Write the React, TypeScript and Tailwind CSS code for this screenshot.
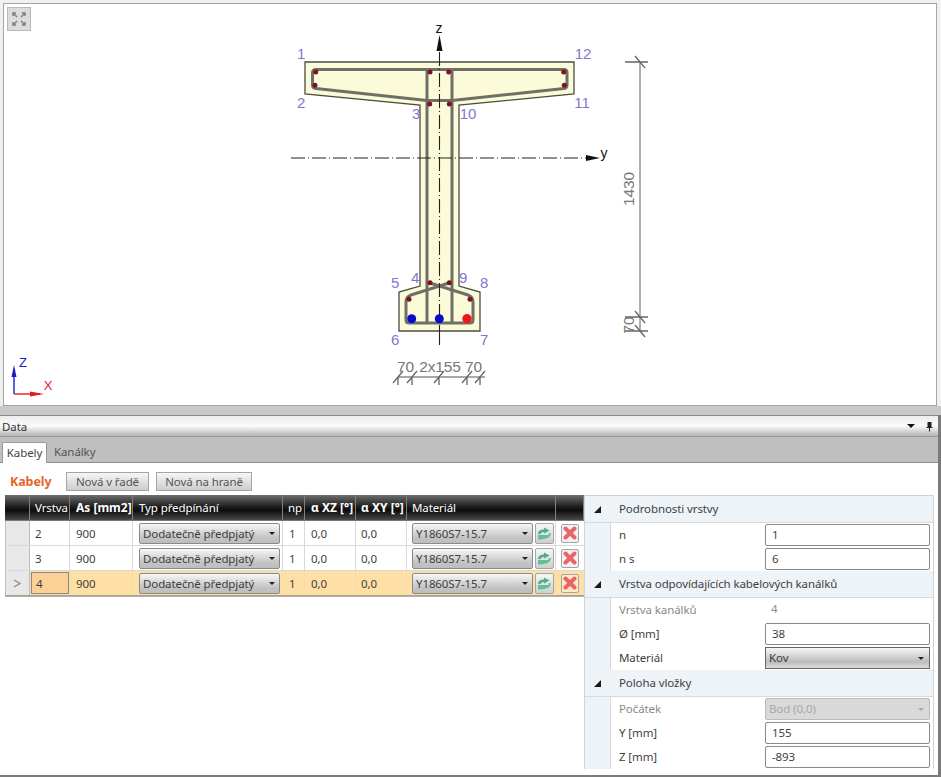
import React from "react";

const cols = [25, 40, 63, 150, 22, 51, 51, 149, 28];

function Select({ text, w }: { text: string; w: string }) {
  return (
    <div className={`${w} h-[21px] flex items-center justify-between pl-[3px] pr-[4px] border border-[#8a8a8a] rounded-[2px] bg-gradient-to-b from-[#f8f8f8] via-[#c4c4c4] via-70% to-[#bdbdbd] text-[#3f3f3f]`}>
      <span className="whitespace-nowrap pt-[1px]">{text}</span>
      <span className="w-0 h-0 border-x-[3px] border-x-transparent border-t-[3px] border-t-[#222]" />
    </div>
  );
}

function Refresh() {
  return (
    <div className="w-[19px] h-[21px] ml-[2px] border border-[#a5a5a5] rounded-[2px] bg-gradient-to-b from-[#f6f6f6] to-[#cfcfcf] flex items-center justify-center">
      <svg width="15" height="13" viewBox="0 0 15 13">
        <path d="M1 7 Q1 2.5 7 2.5 L7 0.5 L12.5 3.5 L7 6.5 L7 5 Q4 5 3.5 7 Z" fill="#4fae86" />
        <path d="M14 6 Q14 12.5 1 12.5 L1 8 L12 8 L11 6.5 Z" fill="#64be98" />
      </svg>
    </div>
  );
}

function Del({ sel }: { sel?: boolean }) {
  return (
    <div className={`w-[18px] h-[19px] border border-[#a5a5a5] rounded-[2px] flex items-center justify-center ${sel ? "bg-[#fde9c4]" : "bg-[#f2f2f2]"}`}>
      <svg width="14" height="14" viewBox="0 0 14 14">
        <path d="M2.5 2.5 L11.5 11.5 M11.5 2.5 L2.5 11.5" stroke="#e8656a" strokeWidth="4" strokeLinecap="round" />
      </svg>
    </div>
  );
}

function Row({ v, sel }: { v: string; sel?: boolean }) {
  const line = sel ? "border-r-[#f3dcae]" : "border-r-[#d9d9d9]";
  const cell = `h-full flex items-center border-r ${line}`;
  const txt = "pt-[1px]";
  return (
    <div className={`flex h-[25px] border-b ${sel ? "border-b-[#a9a38a] bg-[#fedfa6]" : "border-b-[#d9d9d9] bg-white"} text-[#3f3f3f]`}>
      <div style={{ width: cols[0] }} className="h-full flex items-center justify-center bg-[#e8e8e8] border-x border-[#bdbdbd] text-[#888]">
        {sel ? (
          <svg width="9" height="9" viewBox="0 0 9 9"><path d="M1 1 L7 4.5 L1 8" fill="none" stroke="#8a8a8a" strokeWidth="1.3" /></svg>
        ) : null}
      </div>
      {sel ? (
        <div style={{ width: cols[1] }} className="h-full flex items-center pl-[1px] border-r border-r-[#f3dcae]">
          <div className="w-[38px] h-[22px] pl-[4px] pt-[1px] flex items-center border border-[#8a8a8a] bg-[#fdd096]">{v}</div>
        </div>
      ) : (
        <div style={{ width: cols[1] }} className={`${cell} ${txt} pl-[5px]`}>{v}</div>
      )}
      <div style={{ width: cols[2] }} className={`${cell} ${txt} pl-[6px]`}>900</div>
      <div style={{ width: cols[3] }} className={`${cell} pl-[6px]`}><Select text="Dodatečně předpjatý" w="w-[141px]" /></div>
      <div style={{ width: cols[4] }} className={`${cell} ${txt} pl-[6px]`}>1</div>
      <div style={{ width: cols[5] }} className={`${cell} ${txt} pl-[6px]`}>0,0</div>
      <div style={{ width: cols[6] }} className={`${cell} ${txt} pl-[5px]`}>0,0</div>
      <div style={{ width: cols[7] }} className={`${cell} pl-[5px]`}><Select text="Y1860S7-15.7" w="w-[121px]" /><Refresh /></div>
      <div style={{ width: cols[8] }} className="h-full flex items-center justify-center"><Del sel={sel} /></div>
    </div>
  );
}

function Head({ i, t, bold, pl = 5 }: { i: number; t: string; bold?: boolean; pl?: number }) {
  return (
    <div
      style={{ width: cols[i], paddingLeft: pl }}
      className={`h-full flex items-center border-r border-[#808080] whitespace-nowrap ${bold ? "font-bold text-[12px] tracking-normal" : ""}`}
    >
      {t}
    </div>
  );
}

function Group({ t }: { t: string }) {
  return (
    <div className="h-[27px] flex items-center bg-[#eef3f8] border-b border-[#d5dbe0] text-[#3f3f3f]">
      <div className="w-[26px] flex justify-center pr-[2px]">
        <span className="w-0 h-0 border-l-[7px] border-l-transparent border-b-[7px] border-b-[#1a1a1a]" />
      </div>
      <span className="pl-[8px]">{t}</span>
    </div>
  );
}

function Prop({ l, v, kind, dis }: { l: string; v: string; kind?: "plain" | "select" | "disabled"; dis?: boolean }) {
  return (
    <div className="h-[24px] flex bg-white">
      <div className="w-[26px] bg-[#eef3f8] border-r border-[#d5dbe0]" />
      <div className={`w-[154px] pl-[8px] flex items-center ${dis ? "text-[#8a8a8a]" : "text-[#3f3f3f]"}`}>{l}</div>
      <div className="flex-1 flex items-center">
        {kind === "plain" ? (
          <span className="pl-[6px] -mt-[3px] text-[#8a8a8a]">{v}</span>
        ) : kind === "select" ? (
          <div className="w-[165px] h-[22px] flex items-center justify-between px-[3px] border border-[#666] bg-gradient-to-b from-[#f6f6f6] via-[#bcbcbc] via-70% to-[#dcdcdc] text-[#3a3a3a]">
            <span>{v}</span>
            <span className="w-0 h-0 border-x-[3px] border-x-transparent border-t-[3px] border-t-[#222] mr-[2px]" />
          </div>
        ) : kind === "disabled" ? (
          <div className="w-[165px] h-[22px] flex items-center justify-between px-[3px] border border-[#bbb] rounded-[2px] bg-[#d9d9d9] text-[#a8a8a8]">
            <span>{v}</span>
            <span className="w-0 h-0 border-x-[3px] border-x-transparent border-t-[3px] border-t-[#aaa] mr-[2px]" />
          </div>
        ) : (
          <div className="w-[165px] h-[22px] flex items-center pl-[6px] border border-[#8a8a8a] rounded-[2px] bg-white text-[#3f3f3f]">{v}</div>
        )}
      </div>
    </div>
  );
}

function Tick({ x, y }: { x: number; y: number }) {
  return <path d={`M${x - 5} ${y + 6} L${x + 5} ${y - 6} M${x} ${y} L${x} ${y + 8}`} stroke="#666" strokeWidth="1.3" fill="none" />;
}

function TickV({ x, y }: { x: number; y: number }) {
  return <path d={`M${x - 5} ${y - 6} L${x + 5} ${y + 6} M${x - 15} ${y} L${x + 8} ${y}`} stroke="#666" strokeWidth="1.3" fill="none" />;
}

function Drawing() {
  const dark = "#7a1520";
  const reds: [number, number][] = [
    [315.7, 72], [315, 85.3], [430, 72], [448.7, 72], [563.7, 72], [564.3, 85.3], [429.7, 104], [449.3, 104],
    [430, 282.7], [449.3, 282.7], [409, 299.3], [470, 299.3],
  ];
  const labels: [string, number, number][] = [
    ["1", 301, 59], ["2", 301, 108], ["3", 416, 119], ["10", 468, 119], ["11", 582, 108], ["12", 583, 59],
    ["4", 415, 283], ["5", 395, 288], ["9", 463, 283], ["8", 484, 288], ["6", 395, 345], ["7", 484, 345],
  ];
  return (
    <svg width="932" height="401" viewBox="4 4 932 401" className="block" fontFamily="'Liberation Sans', sans-serif">
      <path d="M305 62 H574 V94 L459 105 V286 L480 292 V331 H399 V292 L420 286 V105 L305 94 Z" fill="#fbfbd9" stroke="#4c4c40" strokeWidth="1.3" />
      <g fill="none" stroke="#6f6f68" strokeWidth="3" strokeLinejoin="round">
        <path d="M316 69.5 H564 Q567 69.5 567 72.5 V85 Q567 88 564 88.5 L452 100.5 H427 L316 88.5 Q312.5 88 312.5 85 V73 Q312.5 69.5 316 69.5 Z" />
        <path d="M427 69 V323 M452 69 V323" />
        <path d="M449 283 L411 295 Q406 297 406 302 V320 Q406 323 409 323 H470 Q473 323 473 320 V302 Q473 297 468 295 L430 283" />
      </g>
      <g stroke="#222" strokeWidth="1.1" fill="none" strokeDasharray="14 3 1 3">
        <path d="M439.5 52 V331" />
        <path d="M291 158 H588" />
      </g>
      <path d="M439.5 331 V345" stroke="#222" strokeWidth="1.1" />
      <path d="M439.5 35 L442.5 51 H436.5 Z" fill="#111" />
      <path d="M586 155 L600 158 L586 161 Z" fill="#111" />
      <text x="439" y="33" fontSize="14" textAnchor="middle" fill="#111">z</text>
      <text x="604" y="158" fontSize="14" textAnchor="middle" fill="#111">y</text>
      {reds.map(([x, y], i) => <circle key={i} cx={x} cy={y} r="2.5" fill={dark} />)}
      <circle cx="411.7" cy="318.7" r="4.5" fill="#0a0ac8" />
      <circle cx="439.3" cy="318.7" r="4.5" fill="#0a0ac8" />
      <circle cx="467" cy="318.7" r="4.7" fill="#f01616" />
      {labels.map(([t, x, y]) => (
        <text key={t} x={x} y={y} fontSize="15" textAnchor="middle" fill="#7f78d2">{t}</text>
      ))}
      <path d="M398 377 H485" stroke="#a8a8a8" strokeWidth="1.8" />
      {[398, 412, 439, 467, 480].map((x) => <Tick key={x} x={x} y={377} />)}
      <text x="405.5" y="372" fontSize="15.5" textAnchor="middle" fill="#777">70</text>
      <text x="440" y="372" fontSize="15.5" textAnchor="middle" fill="#777">2x155</text>
      <text x="473.5" y="372" fontSize="15.5" textAnchor="middle" fill="#777">70</text>
      <path d="M640 62 V332" stroke="#a8a8a8" strokeWidth="1.8" />
      {[62, 317, 331].map((y) => <TickV key={y} x={640} y={y} />)}
      <text x="634" y="189" fontSize="15.5" textAnchor="middle" fill="#777" transform="rotate(-90 634 189)">1430</text>
      <text x="634" y="325" fontSize="15.5" textAnchor="middle" fill="#777" transform="rotate(-90 634 325)">70</text>
      <path d="M14 394 V369" stroke="#1c1cc8" strokeWidth="1.4" />
      <path d="M14 365 L16.5 377 H11.5 Z" fill="#1c1cc8" />
      <path d="M14 394 H40" stroke="#e01c1c" strokeWidth="1.4" />
      <path d="M44 394 L30 391.5 V396.5 Z" fill="#e01c1c" />
      <text x="23" y="367" fontSize="13" textAnchor="middle" fill="#1c1cc8">Z</text>
      <text x="48" y="390" fontSize="13" textAnchor="middle" fill="#e01c1c">X</text>
    </svg>
  );
}

export default function App() {
  return (
    <div className="w-[941px] h-[777px] overflow-hidden flex flex-col bg-[#f0f0f0] font-['Noto_Sans',sans-serif] text-[11.5px] tracking-[-0.1px] leading-none">
      <div className="px-[3px] pt-[3px] shrink-0">
        <div className="relative w-[934px] h-[403px] border border-[#a5a5a5] bg-white">
          <Drawing />
          <div className="absolute left-[3px] top-[3px] w-[24px] h-[24px] bg-[#dcdcdc] border border-[#b9b9b9] flex items-center justify-center">
            <svg width="16" height="16" viewBox="0 0 16 16" fill="none" stroke="#7c7c7c" strokeWidth="1.4">
              <path d="M2 2 L6 6 M2 5 V2 H5 M14 2 L10 6 M11 2 H14 V5 M2 14 L6 10 M2 11 V14 H5 M14 14 L10 10 M11 14 H14 V11" />
            </svg>
          </div>
        </div>
      </div>
      <div className="h-[9px] shrink-0 bg-[#c9c9c9]" />
      <div className="flex-1 flex flex-col min-h-0 border-r-[3px] border-b-[2px] border-[#7a7a7a] bg-white">
        <div className="h-[22px] shrink-0 flex items-center justify-between pl-[2px] pr-[5px] border-t border-[#8a8a8a] border-b border-b-[#9a9a9a] bg-gradient-to-b from-[#ececec] via-[#fbfbfb] to-[#b4b4b4] text-[#333]">
          <span className="pt-[2px]">Data</span>
          <div className="flex items-center gap-[11px]">
            <span className="w-0 h-0 border-x-[4px] border-x-transparent border-t-[4px] border-t-[#111]" />
            <svg width="7" height="11" viewBox="0 0 7 11"><path d="M1.5 1 H5.5 V6 H6.5 V7 H4 V10.5 H3 V7 H.5 V6 H1.5 Z" fill="#222" /></svg>
          </div>
        </div>
        <div className="h-[26px] shrink-0 flex items-end pl-[2px] bg-[#bfbfbf] border-b border-[#8f8f8f] text-[#444]">
          <div className="w-[45px] h-[21px] -mb-[1px] flex items-center justify-center bg-white border border-b-0 border-[#9a9a9a] rounded-t-[2px]">Kabely</div>
          <div className="pl-[7px] h-[20px] flex items-center text-[#555]">Kanálky</div>
        </div>
        <div className="h-[32px] shrink-0 flex items-center gap-[7px] pl-[10px] pt-[5px]">
          <span className="w-[49px] text-[#e8642a] font-bold text-[12.5px] pt-[2px]">Kabely</span>
          <div className="w-[83px] h-[19px] flex items-center justify-center border border-[#a5a5a5] bg-gradient-to-b from-[#f6f6f6] to-[#cdcdcd] text-[#555]">Nová v řadě</div>
          <div className="w-[96px] h-[19px] flex items-center justify-center border border-[#a5a5a5] bg-gradient-to-b from-[#f6f6f6] to-[#cdcdcd] text-[#555]">Nová na hraně</div>
        </div>
        <div className="flex-1 flex pl-[5px] items-start">
          <div className="w-[579px] shrink-0 border-b border-[#b0b0b0]">
            <div className="flex h-[26px] text-white bg-gradient-to-b from-[#707070] via-[#0c0c0c] via-60% to-[#4a4a4a] border-b border-[#777]">
              <Head i={0} t="" />
              <Head i={1} t="Vrstva" />
              <Head i={2} t="As [mm2]" bold pl={6} />
              <Head i={3} t="Typ předpínání" pl={6} />
              <Head i={4} t="np" />
              <Head i={5} t="α XZ [°]" bold pl={6} />
              <Head i={6} t="α XY [°]" bold />
              <Head i={7} t="Materiál" />
              <Head i={8} t="" />
            </div>
            <Row v="2" />
            <Row v="3" />
            <Row v="4" sel />
          </div>
          <div className="w-[350px] shrink-0 border-t border-x border-[#cdd3d8]">
            <Group t="Podrobnosti vrstvy" />
            <Prop l="n" v="1" />
            <Prop l="n s" v="6" />
            <Group t="Vrstva odpovídajících kabelových kanálků" />
            <Prop l="Vrstva kanálků" v="4" kind="plain" dis />
            <Prop l="Ø [mm]" v="38" />
            <Prop l="Materiál" v="Kov" kind="select" />
            <Group t="Poloha vložky" />
            <Prop l="Počátek" v="Bod (0,0)" kind="disabled" dis />
            <Prop l="Y [mm]" v="155" />
            <Prop l="Z [mm]" v="-893" />
          </div>
        </div>
      </div>
    </div>
  );
}
